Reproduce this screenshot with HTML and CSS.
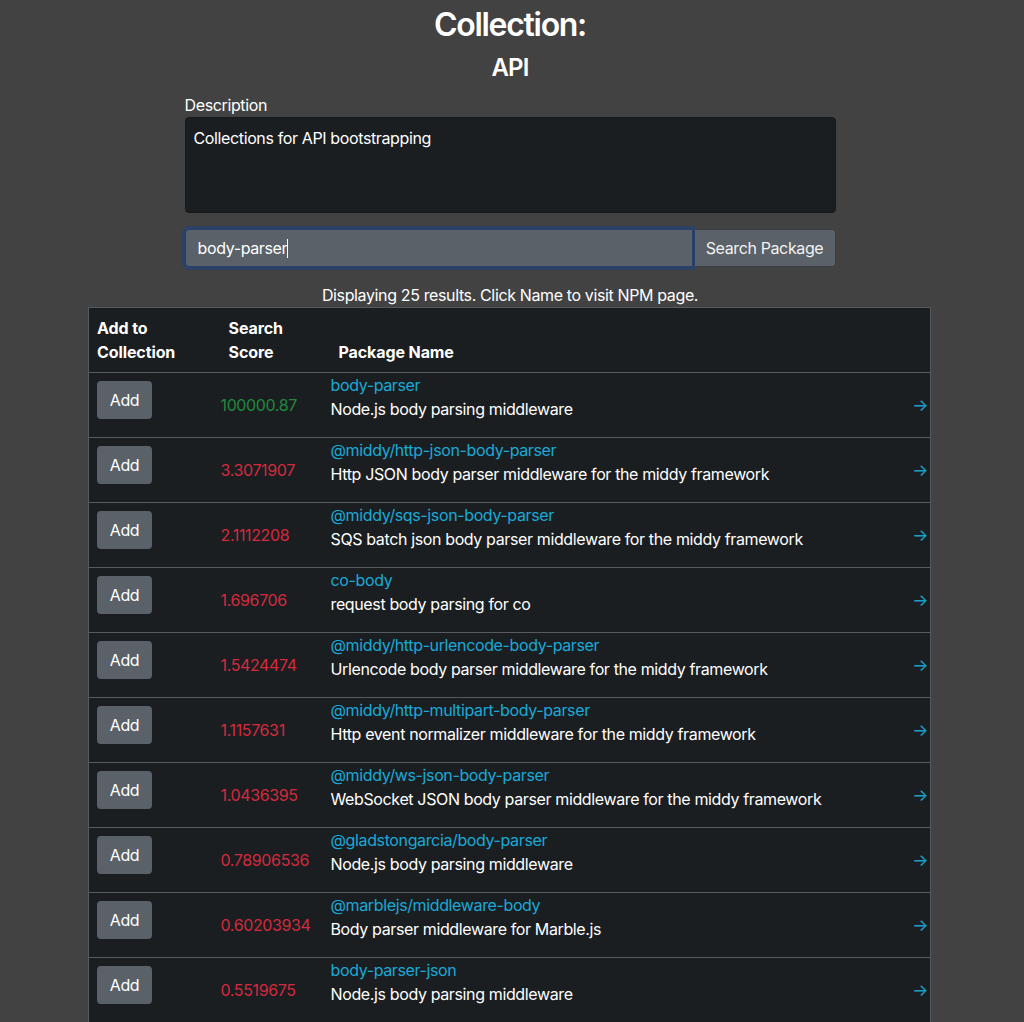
FILE: index.html
```html
<!DOCTYPE html>
<html lang="en">
<head>
<meta charset="utf-8">
<title>Collection: API</title>
<link rel="stylesheet" href="styles.css">
</head>
<body>
<div class="page">
  <h1 class="title">Collection:</h1>
  <h2 class="subtitle">API</h2>
  <div class="form">
    <label class="label">Description</label>
    <div class="desc">Collections for API bootstrapping</div>
    <div class="search">
      <div class="search-input">body-parser<span class="caret"></span></div>
      <div class="search-btn">Search Package</div>
    </div>
  </div>
  <p class="info">Displaying 25 results. Click Name to visit NPM page.</p>
  <table class="results">
    <thead>
      <tr>
        <th class="h-add">Add to<br>Collection</th>
        <th class="h-score">Search<br>Score</th>
        <th class="h-name">Package Name</th>
        <th class="h-arrow"></th>
      </tr>
    </thead>
    <tbody>
      <tr><td class="c-add"><span class="btn">Add</span></td><td class="c-score good">100000.87</td><td class="c-name"><a class="pkg">body-parser</a><p class="pdesc">Node.js body parsing middleware</p></td><td class="c-arrow">→</td></tr>
      <tr><td class="c-add"><span class="btn">Add</span></td><td class="c-score bad">3.3071907</td><td class="c-name"><a class="pkg">@middy/http-json-body-parser</a><p class="pdesc">Http JSON body parser middleware for the middy framework</p></td><td class="c-arrow">→</td></tr>
      <tr><td class="c-add"><span class="btn">Add</span></td><td class="c-score bad">2.1112208</td><td class="c-name"><a class="pkg">@middy/sqs-json-body-parser</a><p class="pdesc">SQS batch json body parser middleware for the middy framework</p></td><td class="c-arrow">→</td></tr>
      <tr><td class="c-add"><span class="btn">Add</span></td><td class="c-score bad">1.696706</td><td class="c-name"><a class="pkg">co-body</a><p class="pdesc">request body parsing for co</p></td><td class="c-arrow">→</td></tr>
      <tr><td class="c-add"><span class="btn">Add</span></td><td class="c-score bad">1.5424474</td><td class="c-name"><a class="pkg">@middy/http-urlencode-body-parser</a><p class="pdesc">Urlencode body parser middleware for the middy framework</p></td><td class="c-arrow">→</td></tr>
      <tr><td class="c-add"><span class="btn">Add</span></td><td class="c-score bad">1.1157631</td><td class="c-name"><a class="pkg">@middy/http-multipart-body-parser</a><p class="pdesc">Http event normalizer middleware for the middy framework</p></td><td class="c-arrow">→</td></tr>
      <tr><td class="c-add"><span class="btn">Add</span></td><td class="c-score bad">1.0436395</td><td class="c-name"><a class="pkg">@middy/ws-json-body-parser</a><p class="pdesc">WebSocket JSON body parser middleware for the middy framework</p></td><td class="c-arrow">→</td></tr>
      <tr><td class="c-add"><span class="btn">Add</span></td><td class="c-score bad">0.78906536</td><td class="c-name"><a class="pkg">@gladstongarcia/body-parser</a><p class="pdesc">Node.js body parsing middleware</p></td><td class="c-arrow">→</td></tr>
      <tr><td class="c-add"><span class="btn">Add</span></td><td class="c-score bad">0.60203934</td><td class="c-name"><a class="pkg">@marblejs/middleware-body</a><p class="pdesc">Body parser middleware for Marble.js</p></td><td class="c-arrow">→</td></tr>
      <tr><td class="c-add"><span class="btn">Add</span></td><td class="c-score bad">0.5519675</td><td class="c-name"><a class="pkg">body-parser-json</a><p class="pdesc">Node.js body parsing middleware</p></td><td class="c-arrow">→</td></tr>
    </tbody>
  </table>
</div>
</body>
</html>
```
FILE: styles.css
```css
* { box-sizing: border-box; }
html, body { margin: 0; padding: 0; }
body {
  background: #424242;
  color: #fff;
  font-family: Inter, "Liberation Sans", sans-serif;
  font-size: 16px;
  line-height: 24px;
  letter-spacing: -0.37px;
}
.page {
  width: 1020px;
  padding-top: 6px;
}
.title {
  margin: 0;
  text-align: center;
  font-size: 32px;
  line-height: 38px;
  font-weight: 600;
  letter-spacing: -1.3px;
}
.subtitle {
  margin: 4px 0 0;
  text-align: center;
  font-size: 24px;
  line-height: 40px;
  font-weight: 600;
  letter-spacing: -0.8px;
}
.form {
  width: 651px;
  margin: 5px auto 0;
}
.label {
  display: block;
  line-height: 24px;
  height: 24px;
}
.desc {
  height: 96px;
  background: #1b1e21;
  border: 1px solid #16181b;
  border-radius: 4px;
  padding: 8px 8px;
}
.search {
  display: flex;
  margin-top: 16px;
  height: 38px;
}
.search-input {
  flex: 1;
  background: #5a6168;
  border: 1px solid #24406b;
  border-radius: 4px 0 0 4px;
  box-shadow: 0 0 0 3px #2b4166;
  padding: 6px 12px;
}
.caret {
  display: inline-block;
  width: 1px;
  height: 19px;
  background: #fff;
  vertical-align: -4px;
}
.search-btn {
  width: 143px;
  background: #5a6168;
  border: 1px solid #3a3f45;
  border-left: 2px solid #24406b;
  border-radius: 0 4px 4px 0;
  padding: 6px 0;
  text-align: center;
  color: #f2f2f2;
}
.info {
  margin: 16px 0 0;
  text-align: center;
  line-height: 24px;
  height: 24px;
}
.results {
  width: 843px;
  margin: 0 0 0 88px;
  border-collapse: collapse;
  background: #1b1e21;
  border: 1px solid #575b60;
}
.results th, .results td {
  border-top: 1px solid #575b60;
}
.results th {
  text-align: left;
  font-weight: 700;
  letter-spacing: -0.1px;
  vertical-align: bottom;
  padding: 8px 8px;
  height: 64px;
}
.h-add { width: 124px; }
.h-score { width: 110px; padding-left: 16px !important; }
.h-name { padding-left: 16px !important; }
.h-arrow { width: 30px; }
.c-add {
  vertical-align: top;
  padding: 8px 8px;
  height: 64px;
}
.btn {
  display: inline-block;
  width: 55px;
  height: 38px;
  line-height: 38px;
  text-align: center;
  background: #5a6168;
  border-radius: 4px;
  color: #fff;
}
.c-score {
  vertical-align: middle;
  padding: 0 8px;
}
.good { color: #1f8a3e; }
.bad { color: #d42a3e; }
.c-name {
  vertical-align: top;
  padding: 0 8px;
}
.pkg {
  display: block;
  color: #1aa9d6;
  text-decoration: none;
}
.pdesc {
  margin: 0 0 16px;
}
.c-arrow {
  vertical-align: middle;
  text-align: right;
  padding: 0 2px 0 0;
  color: #1aa0c8;
  font-size: 17px;
}
```
